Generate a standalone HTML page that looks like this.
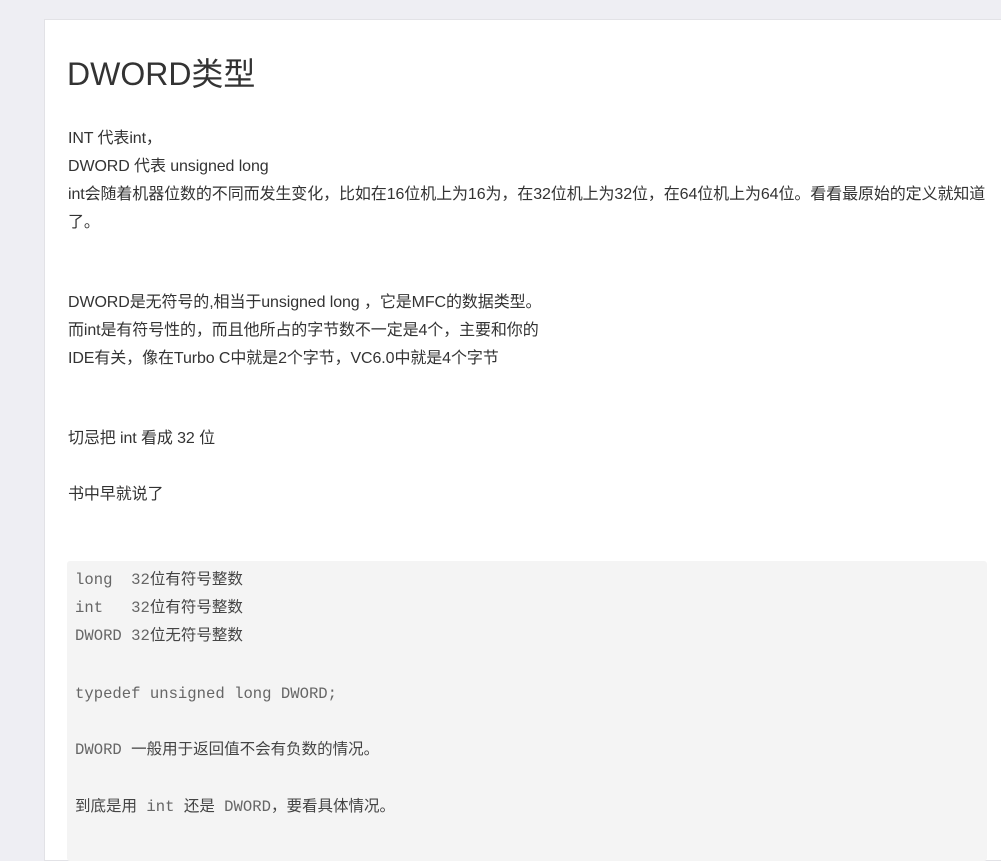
<!DOCTYPE html>
<html><head><meta charset="utf-8"><style>
html,body{margin:0;padding:0;}
body{width:1001px;height:834px;background:#eeeef3;position:relative;overflow:hidden;font-family:"Liberation Sans","Noto Sans CJK SC",sans-serif;color:#333;}
.card{position:absolute;left:44px;top:19px;width:980px;height:840px;background:#fff;border:1px solid #e2e2e6;}
.l{position:absolute;left:68px;font-size:16px;line-height:28px;height:28px;white-space:nowrap;letter-spacing:-0.1px;}
h1{position:absolute;left:67px;top:52px;margin:0;font-size:32px;font-weight:normal;line-height:44px;color:#333;white-space:nowrap;}
.code{position:absolute;left:67px;top:561px;width:920px;height:300px;background:#f4f4f4;border-radius:3px;}
.c{position:absolute;left:75px;font-size:15.6px;line-height:28px;color:#666;white-space:pre;font-family:"Liberation Mono","Noto Sans CJK SC",monospace;}
.c span{font-family:"Liberation Sans","Noto Sans CJK SC",sans-serif;font-size:15.5px;color:#444;}
</style></head><body>
<div class="card"></div>
<h1>DWORD类型</h1>
<div class="l" style="top:125px">INT 代表int，</div>
<div class="l" style="top:153px">DWORD 代表 unsigned long</div>
<div class="l" style="top:181px">int会随着机器位数的不同而发生变化，比如在16位机上为16为，在32位机上为32位，在64位机上为64位。看看最原始的定义就知道</div>
<div class="l" style="top:209px">了。</div>
<div class="l" style="top:289px">DWORD是无符号的,相当于unsigned long ，它是MFC的数据类型。</div>
<div class="l" style="top:317px">而int是有符号性的，而且他所占的字节数不一定是4个，主要和你的</div>
<div class="l" style="top:345px">IDE有关，像在Turbo C中就是2个字节，VC6.0中就是4个字节</div>
<div class="l" style="top:425px">切忌把 int 看成 32 位</div>
<div class="l" style="top:481px">书中早就说了</div>
<div class="code"></div>
<div class="c" style="top:566px">long  32<span>位有符号整数</span></div>
<div class="c" style="top:594px">int   32<span>位有符号整数</span></div>
<div class="c" style="top:622px">DWORD 32<span>位无符号整数</span></div>
<div class="c" style="top:680px">typedef unsigned long DWORD;</div>
<div class="c" style="top:736px">DWORD <span>一般用于返回值不会有负数的情况。</span></div>
<div class="c" style="top:793px"><span>到底是用</span> int <span>还是</span> DWORD<span>，要看具体情况。</span></div>
</body></html>
